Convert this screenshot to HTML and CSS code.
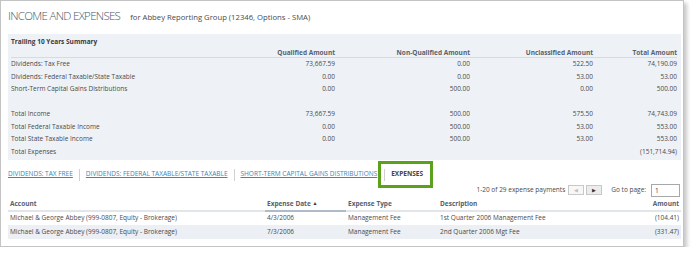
FILE: index.html
```html
<!DOCTYPE html>
<html lang="en">
<head>
    <meta charset="UTF-8">
    <title>Income and Expenses</title>
    <link rel="stylesheet" href="styles.css">
</head>
<body>
    <div class="frame">
        <div class="page-title">
            <h1>INCOME AND EXPENSES</h1>
            <span class="subtitle">for Abbey Reporting Group (12346, Options - SMA)</span>
        </div>

        <div class="summary">
            <div class="summary-title">Trailing 10 Years Summary</div>
            <table class="summary-table">
                <thead>
                    <tr>
                        <th class="s-label"></th>
                        <th class="s-qual">Qualified Amount</th>
                        <th class="s-nonq">Non-Qualified Amount</th>
                        <th class="s-uncl">Unclassified Amount</th>
                        <th class="s-total">Total Amount</th>
                    </tr>
                </thead>
                <tbody>
                    <tr><td>Dividends: Tax Free</td><td>73,667.59</td><td>0.00</td><td>522.50</td><td>74,190.09</td></tr>
                    <tr><td>Dividends: Federal Taxable/State Taxable</td><td>0.00</td><td>0.00</td><td>53.00</td><td>53.00</td></tr>
                    <tr><td>Short-Term Capital Gains Distributions</td><td>0.00</td><td>500.00</td><td>0.00</td><td>500.00</td></tr>
                    <tr class="spacer"><td colspan="5"></td></tr>
                    <tr><td>Total Income</td><td>73,667.59</td><td>500.00</td><td>575.50</td><td>74,743.09</td></tr>
                    <tr><td>Total Federal Taxable Income</td><td>0.00</td><td>500.00</td><td>53.00</td><td>553.00</td></tr>
                    <tr><td>Total State Taxable Income</td><td>0.00</td><td>500.00</td><td>53.00</td><td>553.00</td></tr>
                    <tr><td>Total Expenses</td><td></td><td></td><td></td><td>(151,714.94)</td></tr>
                </tbody>
            </table>
        </div>

        <div class="tabs">
            <a href="#" class="tab">DIVIDENDS: TAX FREE</a>
            <span class="sep"></span>
            <a href="#" class="tab">DIVIDENDS: FEDERAL TAXABLE/STATE TAXABLE</a>
            <span class="sep"></span>
            <a href="#" class="tab">SHORT-TERM CAPITAL GAINS DISTRIBUTIONS</a>
            <span class="highlight">
                <span class="sep"></span>
                <span class="tab active">EXPENSES</span>
            </span>
        </div>

        <div class="pager">
            <span class="pager-count">1-20 of 29 expense payments</span>
            <span class="pager-buttons">
                <button class="pg-btn disabled">&#9664;</button>
                <button class="pg-btn">&#9654;</button>
            </span>
            <label for="goto">Go to page:</label>
            <input type="text" id="goto" value="1">
        </div>

        <table class="expense-table">
            <thead>
                <tr>
                    <th class="c-account">Account</th>
                    <th class="c-date sorted">Expense Date <span class="arrow">&#9650;</span></th>
                    <th class="c-type">Expense Type</th>
                    <th class="c-desc">Description</th>
                    <th class="c-amount">Amount</th>
                </tr>
            </thead>
            <tbody>
                <tr>
                    <td>Michael &amp; George Abbey (999-0807, Equity - Brokerage)</td>
                    <td>4/3/2006</td>
                    <td>Management Fee</td>
                    <td>1st Quarter 2006 Management Fee</td>
                    <td class="c-amount">(104.41)</td>
                </tr>
                <tr class="alt">
                    <td>Michael &amp; George Abbey (999-0807, Equity - Brokerage)</td>
                    <td>7/3/2006</td>
                    <td>Management Fee</td>
                    <td>2nd Quarter 2006 Mgt Fee</td>
                    <td class="c-amount">(331.47)</td>
                </tr>
            </tbody>
        </table>
    </div>
</body>
</html>
```

FILE: styles.css
```css
body {
    margin: 0;
    padding: 0;
    background-color: #fff;
    font-family: "Open Sans", "Noto Sans", sans-serif;
    color: #4a4a4a;
    font-size: 6.5px;
    line-height: 12.5px;
}

.frame {
    width: 684px;
    height: 247px;
    box-sizing: border-box;
    border: 1px solid #c4c4c4;
    box-shadow: 3px 3px 4px rgba(0, 0, 0, 0.22);
    padding: 0 2px 0 7px;
    background-color: #fff;
}

.page-title {
    display: flex;
    align-items: baseline;
    height: 33px;
    padding-top: 7px;
    box-sizing: border-box;
}

.page-title h1 {
    margin: 0 10px 0 0;
    font-size: 11.5px;
    line-height: 16px;
    font-weight: 300;
    letter-spacing: -0.7px;
    color: #4b5866;
}

.subtitle {
    font-size: 7.7px;
    color: #4a4a4a;
}

.summary {
    background-color: #eef2f6;
    padding: 2px 4px 2px 3px;
    height: 126px;
    box-sizing: border-box;
}

.summary-title {
    font-weight: 700;
    color: #353b44;
    line-height: 12px;
}

.summary-table {
    width: 100%;
    border-collapse: collapse;
    table-layout: fixed;
}

.summary-table th {
    text-align: right;
    font-weight: 700;
    color: #55616e;
    border-bottom: 1px solid #d6dbe0;
    padding: 0;
    line-height: 9px;
    height: 9px;
}

.s-label { width: 224px; }
.s-qual { width: 100px; }
.s-nonq { width: 135px; }
.s-uncl { width: 123px; }
.s-total { width: 84px; }

.summary-table td {
    text-align: right;
    padding: 0;
    height: 12.5px;
}

.summary-table td:first-child {
    text-align: left;
}

.tabs {
    display: flex;
    align-items: center;
    height: 27px;
    margin-top: 1px;
}

.tab {
    color: #3a86b7;
    text-decoration: underline;
    font-size: 6.5px;
    white-space: nowrap;
}

.sep {
    width: 1px;
    height: 12px;
    background-color: #d0d0d0;
    margin: 0 6px;
}

.highlight {
    display: flex;
    align-items: center;
    align-self: stretch;
    border: 3px solid #5aa21c;
    padding: 0 7px 0 0;
    margin-left: 1px;
}

.highlight .sep {
    margin: 0 6px 0 3px;
}

.tab.active {
    color: #444;
    font-weight: 700;
    text-decoration: none;
}

.pager {
    display: flex;
    align-items: center;
    justify-content: flex-end;
    margin-top: -5px;
    height: 14px;
    padding-right: 1px;
}

.pager-count {
    margin-right: 3px;
}

.pager-buttons {
    display: flex;
    gap: 2px;
    margin-right: 9px;
}

.pg-btn {
    width: 16px;
    height: 10px;
    padding: 0;
    font-size: 5px;
    color: #333;
    background-color: #ececec;
    border: 1px solid #c8c8c8;
    line-height: 8px;
}

.pg-btn.disabled {
    color: #c0c0c0;
    background-color: #f7f7f7;
}

.pager label {
    margin-right: 5px;
}

.pager input {
    width: 29px;
    height: 13px;
    box-sizing: border-box;
    border: 1px solid #a8a8a8;
    font-family: inherit;
    font-size: 6.5px;
    padding: 0 3px;
    color: #444;
    background-color: #fff;
    outline: none;
}

.expense-table {
    width: 100%;
    border-collapse: collapse;
    table-layout: fixed;
}

.expense-table th,
.expense-table td {
    box-sizing: border-box;
    padding: 0 2px;
}

.expense-table th {
    text-align: left;
    font-weight: 700;
    color: #55616e;
    border-bottom: 2px solid #e2e6ea;
    height: 12px;
    line-height: 12px;
}

.expense-table th.sorted {
    border-bottom-color: #aebbc8;
}

.expense-table .arrow {
    font-size: 5px;
    vertical-align: 1px;
    color: #333;
}

.expense-table td {
    height: 14px;
    white-space: nowrap;
}

.expense-table tr.alt td {
    background-color: #eceff3;
}

.expense-table .c-amount {
    text-align: right;
}

.c-account { width: 257px; }
.c-date { width: 81px; }
.c-type { width: 92px; }
.c-desc { width: 183px; }
```
